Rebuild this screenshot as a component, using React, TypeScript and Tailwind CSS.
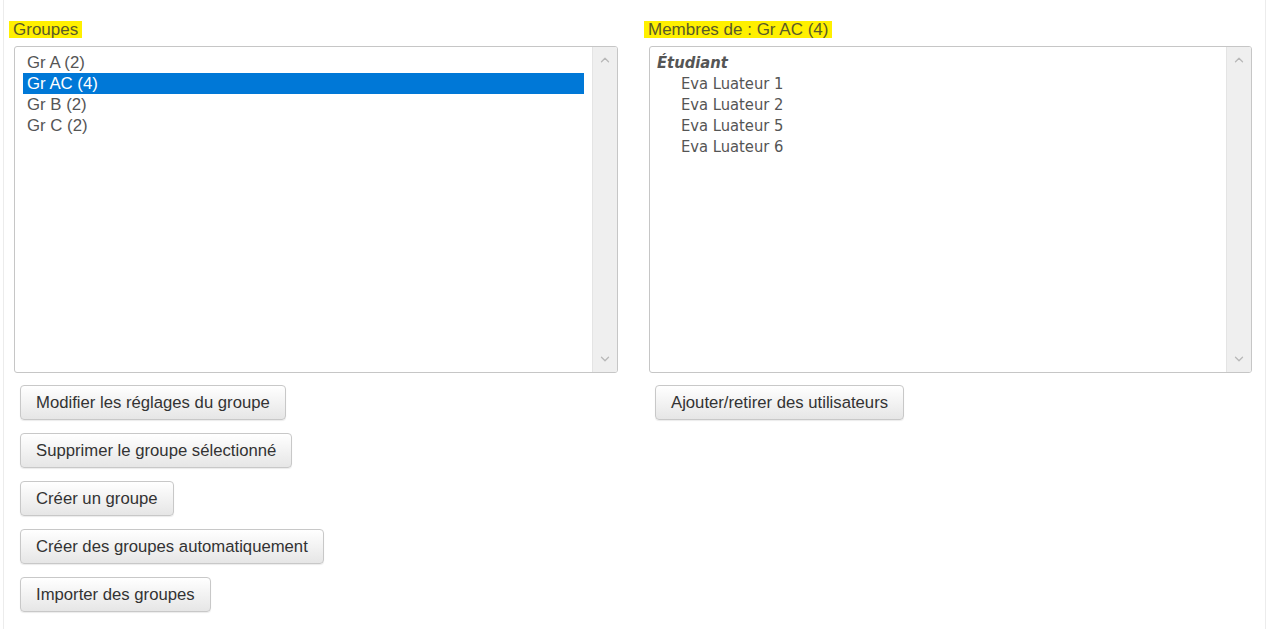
import { ChevronUp, ChevronDown } from "lucide-react";

const groups = ["Gr A (2)", "Gr AC (4)", "Gr B (2)", "Gr C (2)"];
const members = ["Eva Luateur 1", "Eva Luateur 2", "Eva Luateur 5", "Eva Luateur 6"];

function Scrollbar() {
  return (
    <div className="w-[25px] bg-[#efefef] border-l border-[#e4e4e4] flex flex-col items-center justify-between py-[6px]">
      <ChevronUp size={14} strokeWidth={2.2} className="text-[#b8b8b8]" />
      <ChevronDown size={14} strokeWidth={2.2} className="text-[#b8b8b8]" />
    </div>
  );
}

function Btn({ label }: { label: string }) {
  return (
    <button className="h-[35px] px-[15px] rounded-[4px] border border-[#c8c8c8] bg-gradient-to-b from-white to-[#e6e6e6] shadow-[0_1px_1px_rgba(0,0,0,0.08)] text-[16.7px] text-[#333] font-['Liberation_Sans',Arial,sans-serif] whitespace-nowrap">
      {label}
    </button>
  );
}

function Heading({ text }: { text: string }) {
  return (
    <div className="h-[46px] flex items-start pt-[21px]">
      <span className="bg-[#fff000] text-[#5a5a28] text-[17px] leading-[17px] pl-[4px] pr-[4px] -ml-[5px] font-['Liberation_Sans',Arial,sans-serif]">
        {text}
      </span>
    </div>
  );
}

export default function App() {
  return (
    <div className="w-[1269px] h-[629px] bg-white">
      <div className="ml-[3px] w-[1263px] h-full border-l border-r border-[#ececec] flex pl-[10px]">
        {/* groupes */}
        <div className="w-[604px] flex flex-col">
          <Heading text="Groupes" />
          <div className="h-[327px] border border-[#c6c6c6] rounded-[3px] flex overflow-hidden">
            <div className="flex-1 pt-[5px] pl-[8px] pr-[8px] font-['Liberation_Sans',Arial,sans-serif] text-[16.8px] text-[#555]">
              {groups.map((g, i) => (
                <div
                  key={g}
                  className={
                    i === 1
                      ? "h-[21px] leading-[21px] pl-[4px] bg-[#0078d7] text-white"
                      : "h-[21px] leading-[21px] pl-[4px]"
                  }
                >
                  {g}
                </div>
              ))}
            </div>
            <Scrollbar />
          </div>
          <div className="flex flex-col items-start gap-[13px] pl-[6px] pt-[12px]">
            <Btn label="Modifier les réglages du groupe" />
            <Btn label="Supprimer le groupe sélectionné" />
            <Btn label="Créer un groupe" />
            <Btn label="Créer des groupes automatiquement" />
            <Btn label="Importer des groupes" />
          </div>
        </div>

        {/* membres */}
        <div className="w-[603px] ml-[31px] flex flex-col">
          <Heading text="Membres de : Gr AC (4)" />
          <div className="h-[327px] border border-[#c6c6c6] rounded-[3px] flex overflow-hidden">
            <div className="flex-1 pt-[5px] pl-[7px] text-[16.4px] text-[#555] font-['DejaVu_Sans_Condensed','DejaVu_Sans',sans-serif] [font-stretch:condensed]">
              <div className="h-[21px] leading-[21px] font-bold italic">Étudiant</div>
              {members.map((m) => (
                <div key={m} className="h-[21px] leading-[21px] pl-[24px]">
                  {m}
                </div>
              ))}
            </div>
            <Scrollbar />
          </div>
          <div className="pl-[6px] pt-[12px]">
            <Btn label="Ajouter/retirer des utilisateurs" />
          </div>
        </div>
      </div>
    </div>
  );
}
